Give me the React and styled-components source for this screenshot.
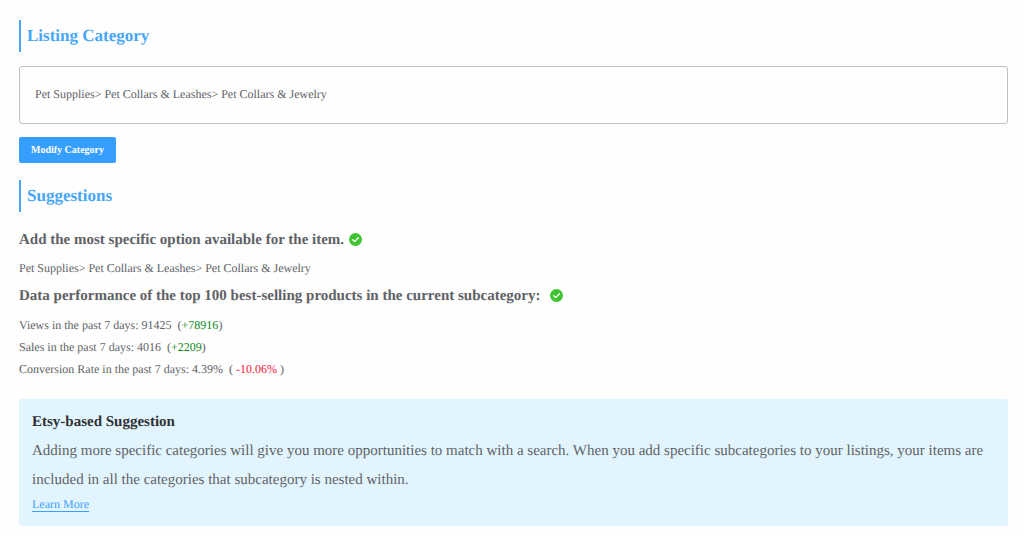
import React from "react";
import styled, { createGlobalStyle } from "styled-components";

const GlobalStyle = createGlobalStyle`
  * {
    box-sizing: border-box;
  }

  body {
    margin: 0;
    background-color: #fefefe;
    color: #606266;
    font-family: "Liberation Serif", "Times New Roman", serif;
    text-rendering: geometricPrecision;
  }
`;

const Container = styled.main`
  padding: 20px 16px 10px 19px;
`;

const SectionTitle = styled.h2`
  margin: 0 0 14px;
  padding-left: 6px;
  border-left: 2px solid #46a6f7;
  color: #46a6f7;
  font-size: 17px;
  line-height: 32px;
`;

const CategoryBox = styled.div`
  padding: 16px 15px 18px;
  border: 1px solid #c0c0c0;
  border-radius: 3px;
  font-size: 12px;
  line-height: 22px;
`;

const Button = styled.button`
  display: block;
  height: 26px;
  margin: 13px 0 17px;
  padding: 0 12px 2px;
  border: none;
  border-radius: 2px;
  background-color: #369eff;
  color: white;
  font-family: inherit;
  font-size: 10px;
  font-weight: bold;
  cursor: pointer;
`;

const CheckTitle = styled.h3`
  display: flex;
  align-items: center;
  gap: ${({ $wide }) => ($wide ? "10px" : "5px")};
  margin: 0 0 3px;
  color: #606266;
  font-size: 15px;
  line-height: 28px;
`;

const CheckSvg = styled.svg`
  flex: none;
  width: 13px;
  height: 13px;
  margin-bottom: 2px;
`;

const Text = styled.p`
  margin: 0 0 3px;
  font-size: 12px;
  line-height: 22px;
`;

const StatList = styled.ul`
  margin: 4px 0 19px;
  padding: 0;
  list-style: none;
  font-size: 12px;
  line-height: 22px;
  white-space: pre;
`;

const Change = styled.span`
  color: ${({ $down }) => ($down ? "#f5163b" : "#0a8a1c")};
`;

const Tip = styled.section`
  padding: 9px 13px 14px;
  border-radius: 3px;
  background-color: #e2f5fe;
`;

const TipTitle = styled.h3`
  margin: 0;
  color: #303133;
  font-size: 15px;
  line-height: 29px;
`;

const TipText = styled.p`
  margin: 0 0 3px;
  font-size: 15px;
  line-height: 29px;
`;

const TipLink = styled.a`
  display: block;
  width: fit-content;
  border-bottom: 1px solid #409eff;
  color: #409eff;
  font-size: 12px;
  line-height: 13px;
  text-decoration: none;
`;

const category = "Pet Supplies> Pet Collars & Leashes> Pet Collars & Jewelry";

const stats = [
  { label: "Views", value: "91425", change: "+78916" },
  { label: "Sales", value: "4016", change: "+2209" },
  { label: "Conversion Rate", value: "4.39%", change: " -10.06% ", down: true },
];

const CheckIcon = () => (
  <CheckSvg viewBox="0 0 13 13" aria-hidden="true">
    <circle cx="6.5" cy="6.5" r="6.5" fill="#3fc52f" />
    <path
      d="M3.7 6.7 5.7 8.6 9.4 4.8"
      fill="none"
      stroke="white"
      strokeWidth="1.3"
      strokeLinecap="round"
      strokeLinejoin="round"
    />
  </CheckSvg>
);

const App = () => {
  return (
    <>
      <GlobalStyle />
      <Container>
        <SectionTitle>Listing Category</SectionTitle>
        <CategoryBox>{category}</CategoryBox>
        <Button type="button">Modify Category</Button>

        <SectionTitle>Suggestions</SectionTitle>
        <CheckTitle>
          Add the most specific option available for the item.
          <CheckIcon />
        </CheckTitle>
        <Text>{category}</Text>
        <CheckTitle $wide>
          Data performance of the top 100 best-selling products in the current subcategory:
          <CheckIcon />
        </CheckTitle>
        <StatList>
          {stats.map((stat) => (
            <li key={stat.label}>
              {`${stat.label} in the past 7 days: ${stat.value}  (`}
              <Change $down={stat.down}>{stat.change}</Change>)
            </li>
          ))}
        </StatList>

        <Tip>
          <TipTitle>Etsy-based Suggestion</TipTitle>
          <TipText>
            Adding more specific categories will give you more opportunities to match with a
            search. When you add specific subcategories to your listings, your items are included
            in all the categories that subcategory is nested within.
          </TipText>
          <TipLink href="#">Learn More</TipLink>
        </Tip>
      </Container>
    </>
  );
};

export default App;
